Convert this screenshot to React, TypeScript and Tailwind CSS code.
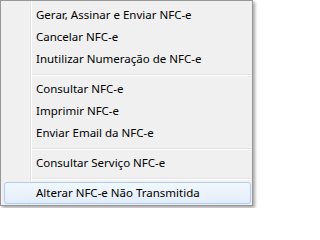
import React from 'react';

type Entry = { label: string; active?: boolean } | 'sep';

const entries: Entry[] = [
  { label: 'Gerar, Assinar e Enviar NFC-e' },
  { label: 'Cancelar NFC-e' },
  { label: 'Inutilizar Numeração de NFC-e' },
  'sep',
  { label: 'Consultar NFC-e' },
  { label: 'Imprimir NFC-e' },
  { label: 'Enviar Email da NFC-e' },
  'sep',
  { label: 'Consultar Serviço NFC-e' },
  'sep',
  { label: 'Alterar NFC-e Não Transmitida', active: true },
];

export default function App() {
  return (
    <div className="w-[256px] h-[208px] bg-white font-['Noto_Sans',sans-serif] text-[11.5px] text-black">
      <div className="w-[253px] h-[206px] border border-[#979797] pt-[3px] pb-[1px] pl-[3px] pr-[1px] shadow-[2px_2px_3px_rgba(0,0,0,0.35)] bg-[linear-gradient(to_right,#f0f0f0_29px,#e2e3e3_29px,#e2e3e3_30px,#ffffff_30px,#ffffff_31px,#f0f0f0_31px)]">
        {entries.map((e, i) =>
          e === 'sep' ? (
            <div key={i} className="h-[8px] pt-[4px]">
              <div className="ml-[28px] h-px bg-[#e2e3e3] shadow-[0_1px_0_#ffffff]" />
            </div>
          ) : (
            <div
              key={i}
              className={
                e.active
                  ? 'h-[22px] flex items-center pl-[31px] border border-[#aeccf5] rounded-[3px] bg-[linear-gradient(to_bottom,#f2f7fe,#e3edfb)]'
                  : 'h-[22px] flex items-center pl-[32px]'
              }
            >
              <span className="whitespace-nowrap">{e.label}</span>
            </div>
          )
        )}
      </div>
    </div>
  );
}
